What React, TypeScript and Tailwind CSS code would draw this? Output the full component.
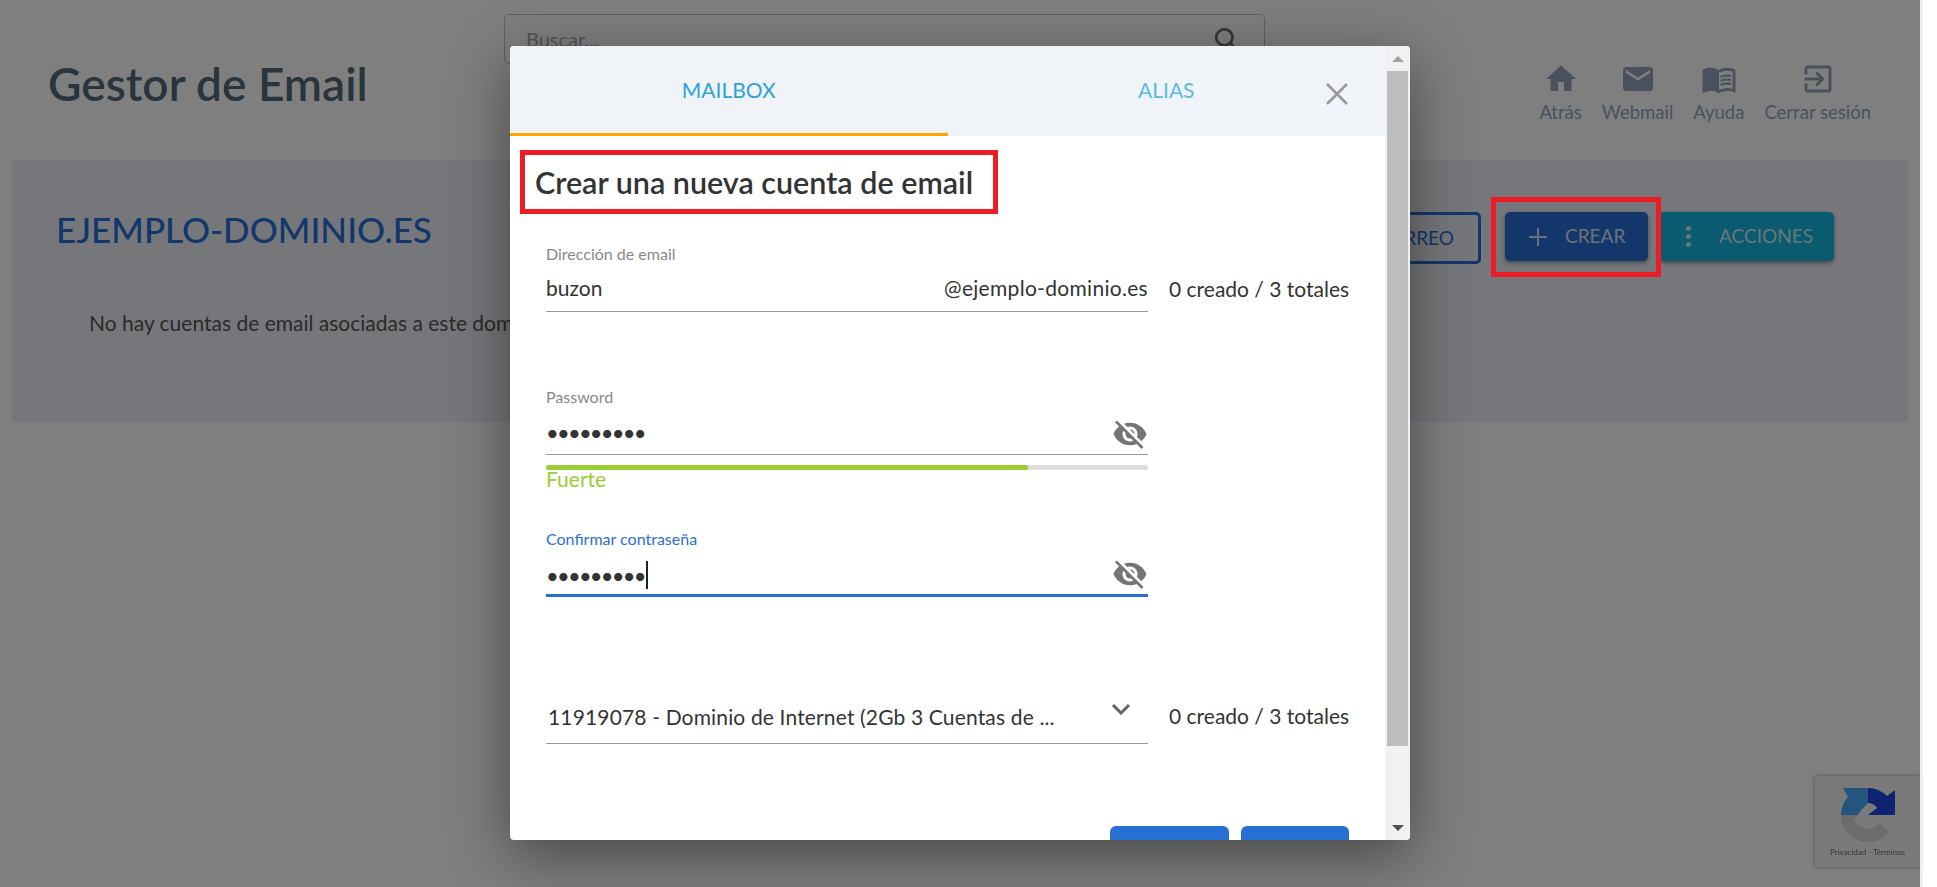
const font = "font-['Lato','Liberation_Sans',sans-serif]";

const navItems = [
  { label: "Atrás", d: "M10 20v-6h4v6h5v-8h3L12 3 2 12h3v8z" },
  {
    label: "Webmail",
    d: "M20 4H4c-1.1 0-1.99.9-1.99 2L2 18c0 1.1.9 2 2 2h16c1.1 0 2-.9 2-2V6c0-1.1-.9-2-2-2zm0 4l-8 5-8-5V6l8 5 8-5v2z",
  },
  {
    label: "Ayuda",
    d: "M21 5c-1.11-.35-2.33-.5-3.5-.5-1.95 0-4.05.4-5.5 1.5-1.45-1.1-3.55-1.5-5.5-1.5S2.45 4.9 1 6v14.65c0 .25.25.5.5.5.1 0 .15-.05.25-.05C3.1 20.45 5.05 20 6.5 20c1.95 0 4.05.4 5.5 1.5 1.35-.85 3.8-1.5 5.5-1.5 1.65 0 3.35.3 4.75 1.05.1.05.15.05.25.05.25 0 .5-.25.5-.5V6c-.6-.45-1.25-.75-2-1zm0 13.5c-1.1-.35-2.3-.5-3.5-.5-1.7 0-4.15.65-5.5 1.5V8c1.35-.85 3.8-1.5 5.5-1.5 1.2 0 2.4.15 3.5.5v11.5zM17.5 10.5c.88 0 1.73.09 2.5.26V9.24c-.79-.15-1.64-.24-2.5-.24-1.7 0-3.24.29-4.5.83v1.66c1.13-.64 2.7-.99 4.5-.99zM13 12.49v1.66c1.13-.64 2.7-.99 4.5-.99.88 0 1.73.09 2.5.26V11.9c-.79-.15-1.64-.24-2.5-.24-1.7 0-3.24.3-4.5.83zM17.5 14.33c-1.7 0-3.24.29-4.5.83v1.66c1.13-.64 2.7-.99 4.5-.99.88 0 1.73.09 2.5.26v-1.52c-.79-.16-1.64-.24-2.5-.24z",
  },
  {
    label: "Cerrar sesión",
    d: "M10.09 15.59L11.5 17l5-5-5-5-1.41 1.41L12.67 11H3v2h9.67l-2.58 2.59zM19 3H5c-1.11 0-2 .9-2 2v4h2V5h14v14H5v-4H3v4c0 1.1.89 2 2 2h14c1.1 0 2-.9 2-2V5c0-1.1-.9-2-2-2z",
  },
];

const EyeOff = () => (
  <svg viewBox="0 0 24 24" className="absolute right-0 bottom-[2px] h-[36px] w-[36px] fill-[#757575]">
    <path d="M12 7c2.76 0 5 2.24 5 5 0 .65-.13 1.26-.36 1.83l2.92 2.92c1.51-1.26 2.7-2.89 3.43-4.75-1.73-4.39-6-7.5-11-7.5-1.4 0-2.74.25-3.98.7l2.16 2.16C10.74 7.13 11.35 7 12 7zM2 4.27l2.28 2.28.46.46C3.08 8.3 1.78 10.02 1 12c1.73 4.39 6 7.5 11 7.5 1.55 0 3.03-.3 4.38-.84l.42.42L19.73 22 21 20.73 3.27 3 2 4.27zM7.53 9.8l1.55 1.55c-.05.21-.08.43-.08.65 0 1.66 1.34 3 3 3 .22 0 .44-.03.65-.08l1.55 1.55c-.67.33-1.41.53-2.2.53-2.76 0-5-2.24-5-5 0-.79.2-1.53.53-2.2zm4.31-.78l3.15 3.15.02-.16c0-1.66-1.34-3-3-3l-.17.01z" />
  </svg>
);

const Background = () => (
  <div className="mr-[17px]">
    <header className="flex h-[160px] items-start">
      <h1 className="mt-[58px] w-[504px] pl-[48px] text-[46px] leading-[52px] font-semibold text-[#54687a]">
        Gestor de Email
      </h1>
      <div className="mt-[14px] flex h-[50px] w-[761px] items-center justify-between rounded-[5px] border border-[#bebebe] pr-[25px] pl-[21px] text-[20px] text-[#aaa]">
        <span>Buscar...</span>
        <svg viewBox="0 0 24 24" className="h-[26px] w-[26px] fill-none stroke-[#707070] stroke-[2.6]">
          <circle cx="10.5" cy="10.5" r="7.5" />
          <path d="M16 16l6 6" />
        </svg>
      </div>
      <nav className="ml-auto flex gap-[20px] pt-[61px] pr-[49px]">
        {navItems.map((item) => (
          <div key={item.label} className="flex flex-col items-center text-[18.5px] leading-[24px] text-[#94a3bd]">
            <svg viewBox="0 0 24 24" className="mb-[3px] h-[36px] w-[36px] fill-[#94a3bd]">
              <path d={item.d} />
            </svg>
            <span>{item.label}</span>
          </div>
        ))}
      </nav>
    </header>
    <section className="mx-[12px] flex h-[262px] items-start justify-between bg-[#eceef5] pt-[52px] pr-[74px] pl-[44px]">
      <div>
        <h2 className="text-[35px] leading-[34px] font-medium text-[#286ed6]">EJEMPLO-DOMINIO.ES</h2>
        <p className="mt-[63px] pl-[33px] text-[21px] leading-[28px] text-[#555]">
          No hay cuentas de email asociadas a este dominio
        </p>
      </div>
      <div className="flex items-start">
        <button className="mr-[24px] h-[52px] w-[200px] rounded-[5px] border-[3px] border-[#286ed6] pr-[24px] text-right text-[19px] text-[#286ed6]">
          CORREO
        </button>
        <button className="mr-[11px] flex h-[49px] w-[143px] items-center gap-[17px] rounded-[5px] bg-[#286ed6] pl-[23px] text-[19px] text-[#d6e3f6] shadow-[0_2px_4px_rgba(0,0,0,0.4)]">
          <svg viewBox="0 0 20 20" className="h-[20px] w-[20px] stroke-current stroke-2">
            <path d="M10 1v18M1 10h18" />
          </svg>
          CREAR
        </button>
        <button className="flex h-[49px] w-[175px] items-center gap-[28px] rounded-[5px] bg-[#14b4e0] pl-[27px] text-[19px] text-[#cdeef8] shadow-[0_2px_4px_rgba(0,0,0,0.4)]">
          <span className="flex flex-col gap-[3px]">
            <i className="h-[5px] w-[5px] rounded-full bg-current" />
            <i className="h-[5px] w-[5px] rounded-full bg-current" />
            <i className="h-[5px] w-[5px] rounded-full bg-current" />
          </span>
          ACCIONES
        </button>
      </div>
    </section>
  </div>
);

const Recaptcha = () => (
  <div className="absolute top-[776px] left-[1815px] flex h-[91px] w-[105px] flex-col items-center rounded-l-[3px] bg-[#f5f5f5] pt-[9px] shadow-[0_0_4px_rgba(0,0,0,0.4)] blur-[0.6px]">
    <svg viewBox="0 0 60 60" className="h-[60px] w-[60px]">
      <path d="M3 30A27 27 0 0 1 10 12L5 3H30V18L24 24 20 30Z" fill="#46aaff" />
      <path d="M30 3A27 27 0 0 1 49 11L57 5V30H30L39 23A11 11 0 0 0 30 18Z" fill="#1c48e0" />
      <path d="M3 30H20L16 36A16 16 0 0 0 42 38L51 47A27 27 0 0 1 3 30Z" fill="#d8d8d8" />
    </svg>
    <span className="mt-[2px] text-[8px] leading-[10px] whitespace-nowrap text-[#666]">Privacidad - Términos</span>
  </div>
);

const Modal = () => (
  <div className="absolute top-[46px] left-[510px] flex h-[794px] w-[900px] overflow-hidden rounded-[4px] bg-white shadow-[0_15px_60px_rgba(0,0,0,0.45)]">
    <div className="w-[875px] shrink-0">
      <div className="relative flex h-[90px] bg-[#f0f3f8] text-[21px]">
        <div className="flex w-[438px] items-start justify-center border-b-[3px] border-[#ffa500] pt-[31px] leading-[26px] text-[#2ea3d5]">
          MAILBOX
        </div>
        <div className="flex w-[438px] items-start justify-center pt-[31px] leading-[26px] text-[#5bbce0]">ALIAS</div>
        <svg viewBox="0 0 22 22" className="absolute top-[37px] right-[37px] h-[22px] w-[22px] stroke-[#999] stroke-[2.6]">
          <path d="M1 1l20 20M21 1L1 21" />
        </svg>
      </div>

      <div className="mt-[14px] ml-[10px] w-fit border-[5px] border-[#ed1c24] py-[10px] pr-[20px] pl-[10px] text-[30.5px] leading-[34px] font-semibold text-[#333]">
        Crear una nueva cuenta de email
      </div>

      <div className="mt-[30px] ml-[36px] flex items-end gap-[21px]">
        <div className="w-[602px]">
          <label className="block text-[16px] leading-[20px] text-[#888]">Dirección de email</label>
          <div className="mt-[9px] flex justify-between border-b-[1.5px] border-[#999] pb-[8px] text-[21px] leading-[30px] text-[#333]">
            <span>buzon</span>
            <span className="tracking-[0.3px]">@ejemplo-dominio.es</span>
          </div>
        </div>
        <span className="pb-[8px] text-[21px] leading-[30px] text-[#333]">0 creado / 3 totales</span>
      </div>

      <div className="mt-[75px] ml-[36px] w-[602px]">
        <label className="block text-[16px] leading-[20px] text-[#888]">Password</label>
        <div className="relative mt-[8px] h-[40px] border-b-[1.5px] border-[#999] text-[22px] leading-[36px] tracking-[-1.8px] text-[#333]">
          •••••••••
          <EyeOff />
        </div>
        <div className="mt-[10px] h-[5px] rounded-full bg-[#ddd]">
          <div className="h-full w-[80%] rounded-full bg-[#9acd32]" />
        </div>
        <div className="-mt-[2px] text-[21px] leading-[22px] text-[#9acd32]">Fuerte</div>

        <label className="mt-[39px] block text-[16px] leading-[20px] text-[#2970d6]">Confirmar contraseña</label>
        <div className="relative mt-[9px] flex h-[39px] border-b-[3px] border-[#2670d3] text-[22px] leading-[36px] tracking-[-1.8px] text-[#333]">
          •••••••••
          <i className="mt-[3px] ml-[1.8px] h-[28px] w-[2px] bg-[#222]" />
          <EyeOff />
        </div>
      </div>

      <div className="mt-[90px] ml-[36px] flex items-end gap-[21px]">
        <div className="relative h-[57px] w-[602px] border-b-[1.5px] border-[#999] pt-[15px] pl-[2px] text-[21px] leading-[30px] tracking-[0.15px] text-[#333]">
          11919078 - Dominio de Internet (2Gb 3 Cuentas de ...
          <svg viewBox="0 0 20 12" className="absolute top-[16px] right-[17px] h-[12px] w-[20px] fill-none stroke-[#666] stroke-[3]">
            <path d="M2 2l8 8 8-8" />
          </svg>
        </div>
        <span className="pb-[13px] text-[21px] leading-[30px] text-[#333]">0 creado / 3 totales</span>
      </div>

      <div className="mt-[82px] ml-[600px] flex gap-[12px]">
        <button className="h-[44px] w-[119px] rounded-[6px] bg-[#2670d3]" />
        <button className="h-[44px] w-[108px] rounded-[6px] bg-[#2670d3]" />
      </div>
    </div>
    <div className="flex w-[25px] flex-col items-center bg-[#f1f1f1]">
      <div className="flex h-[25px] items-center">
        <i className="border-x-[6px] border-b-[6px] border-x-transparent border-b-[#a3a3a3]" />
      </div>
      <div className="h-[675px] w-[21px] bg-[#bebebe]" />
      <div className="mt-auto flex h-[25px] items-center">
        <i className="border-x-[6px] border-t-[6px] border-x-transparent border-t-[#505050]" />
      </div>
    </div>
  </div>
);

export default function App() {
  return (
    <div className={`relative h-[887px] overflow-hidden bg-white ${font}`}>
      <Background />
      <Recaptcha />
      <div className="absolute inset-y-0 right-[14px] left-0 border-r-[3px] border-[#eee] bg-black/50" />
      <div className="absolute top-[197px] left-[1491px] h-[80px] w-[170px] border-[5px] border-[#ed1c24]" />
      <Modal />
    </div>
  );
}
